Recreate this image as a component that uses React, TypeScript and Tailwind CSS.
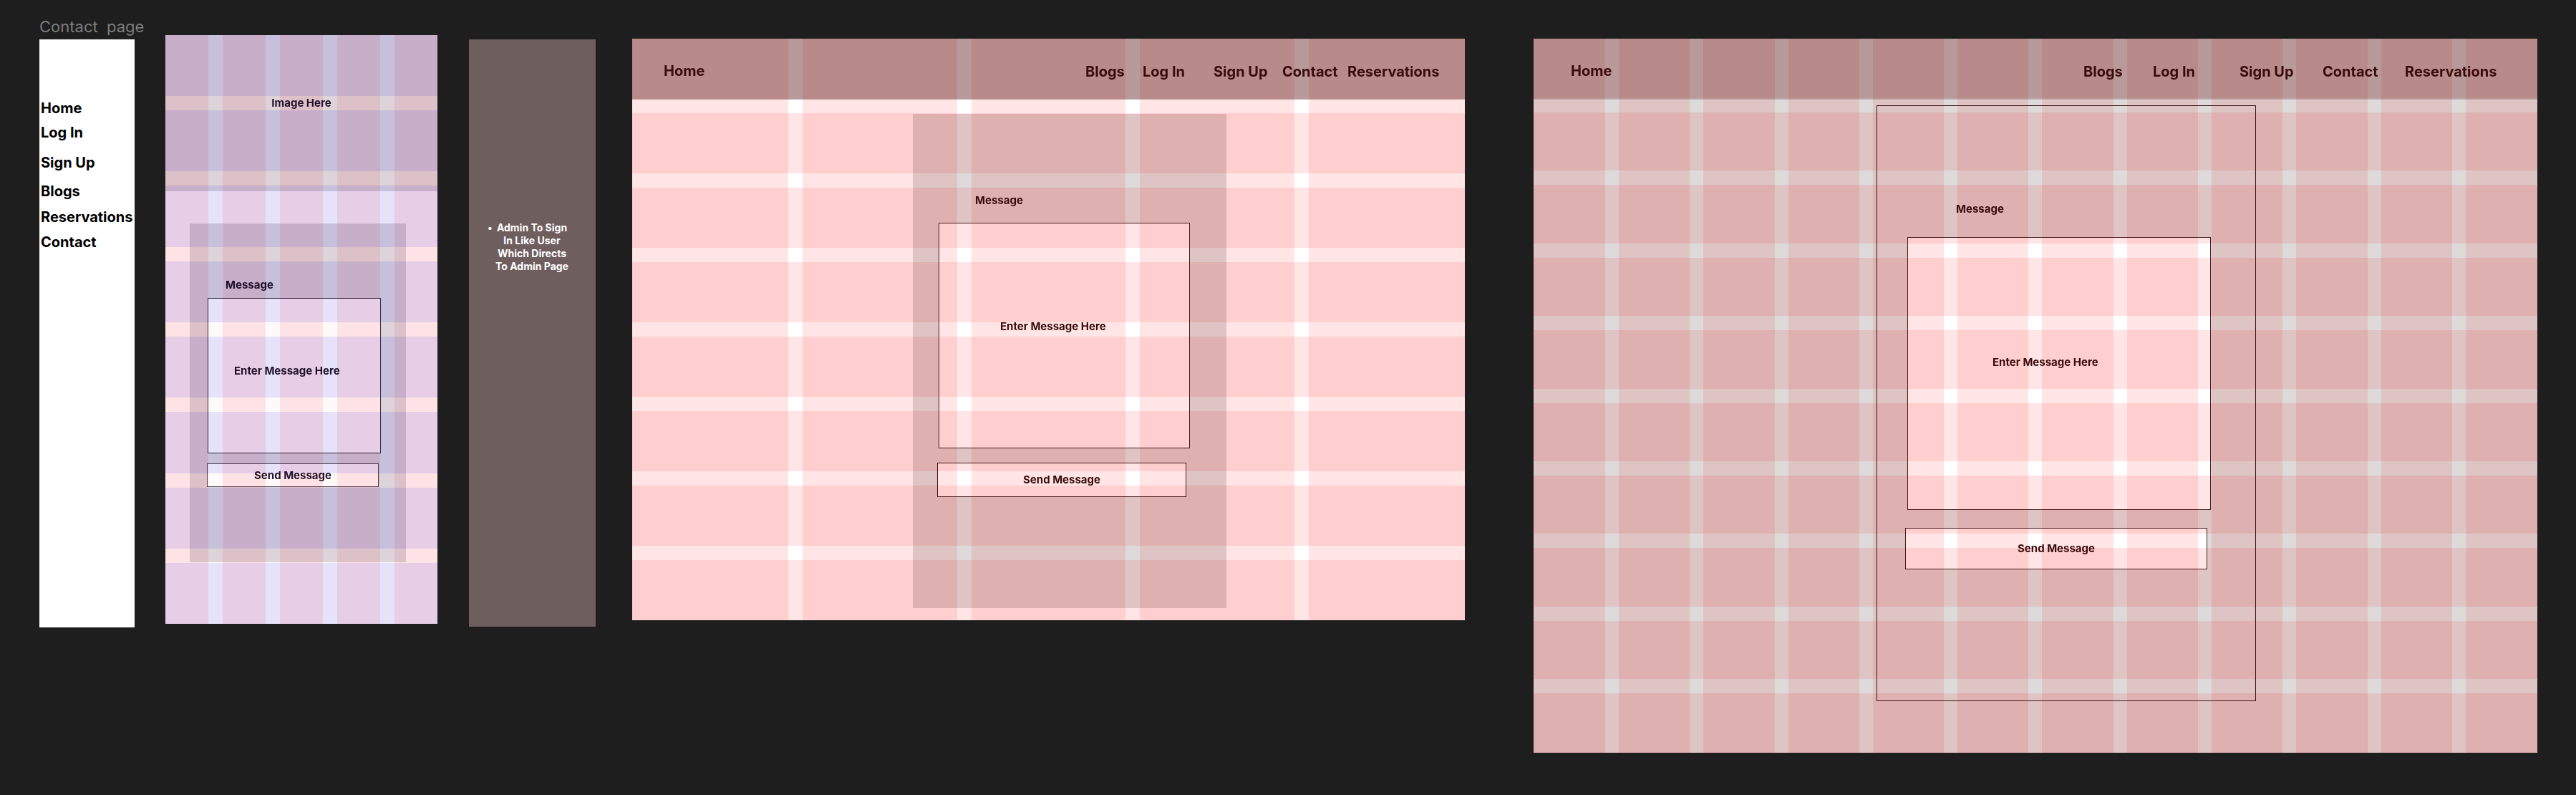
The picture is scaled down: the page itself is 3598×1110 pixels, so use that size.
import React from "react";

function Cols({ n, cls, stripe }: { n: number; cls: string; stripe: string }) {
  return (
    <div className={"pointer-events-none absolute inset-0 flex justify-between " + cls}>
      {Array.from({ length: n }).map((_, i) => (
        <div key={i} className={"h-full " + stripe} />
      ))}
    </div>
  );
}

function Rows({ n, cls, stripe }: { n: number; cls: string; stripe: string }) {
  return (
    <div className={"pointer-events-none absolute inset-0 flex flex-col justify-between " + cls}>
      {Array.from({ length: n }).map((_, i) => (
        <div key={i} className={"w-full " + stripe} />
      ))}
    </div>
  );
}

const PINK_STRIPE_V = "w-[20px] bg-[#001a1a] mix-blend-color-dodge";
const PINK_STRIPE_H = "h-[20px] bg-[#001a1a] mix-blend-color-dodge";

export default function App() {
  return (
    <div className="relative h-[1110px] w-[3598px] overflow-hidden bg-[#1e1e1e] font-['Inter',sans-serif]">
      {/* canvas label */}
      <div className="absolute left-[55px] top-[26px] whitespace-pre text-[22px] leading-[22px] text-[#7d7d7d]">
        Contact  page
      </div>

      {/* Frame 1: white side nav */}
      <div className="absolute left-[55px] top-[55px] flex h-[821px] w-[133px] flex-col items-start bg-white pl-[2px] pt-[84px] text-[20px] font-bold leading-[24px] text-black">
        <span>Home</span>
        <span className="mt-[10px]">Log In</span>
        <span className="mt-[18px]">Sign Up</span>
        <span className="mt-[16px]">Blogs</span>
        <span className="mt-[12px]">Reservations</span>
        <span className="mt-[11px]">Contact</span>
      </div>

      {/* Frame 2: purple mobile */}
      <div className="absolute left-[231px] top-[49px] isolate h-[822px] w-[380px] overflow-hidden bg-[#e5cee6] text-[15px] font-bold leading-[18px] text-[#20102a]">
        <div className="h-[218px] bg-[#c7afc9] pt-[86px] text-center">Image Here</div>
        <div className="ml-[34px] mt-[45px] flex h-[473px] w-[302px] flex-col items-start bg-[#c7afc9]">
          <p className="ml-[50px] mt-[77px]">Message</p>
          <div className="ml-[25px] mt-[9px] h-[217px] w-[242px] border border-[#342538] bg-[#e5cee6] pl-[36px] pt-[92px]">
            Enter Message Here
          </div>
          <div className="ml-[24px] mt-[14px] flex h-[33px] w-[240px] items-center justify-center border border-[#4a3a4e] bg-[#e5cee6]">
            Send Message
          </div>
        </div>
        <Cols n={4} cls="px-[60px]" stripe="w-[20px] bg-[#001714] mix-blend-color-dodge" />
        <Rows n={7} cls="py-[85px]" stripe="h-[20px] bg-[#191800] mix-blend-color-dodge" />
      </div>

      {/* Frame: admin note */}
      <div className="absolute left-[655px] top-[55px] h-[820px] w-[177px] bg-[#6f5e5e] pl-[26px] pt-[254px] text-[14px] font-bold leading-[18px] text-white">
        <div className="flex items-start">
          <span className="w-[9px]">•</span>
          <div className="w-[106px] text-center">
            Admin To Sign
            <br />
            In Like User
            <br />
            Which Directs
            <br />
            To Admin Page
          </div>
        </div>
      </div>

      {/* Frame 3: pink desktop */}
      <div className="absolute left-[883px] top-[54px] isolate h-[812px] w-[1163px] overflow-hidden bg-[#ffcece] text-[#3b0b0b]">
        <header className="flex h-[85px] items-start bg-[#b98a8a] pl-[44px] pt-[33px] text-[20px] font-bold leading-[24px]">
          <span className="w-[589px]">Home</span>
          <nav className="mt-[1px] flex">
            <span className="w-[80px]">Blogs</span>
            <span className="w-[99px]">Log In</span>
            <span className="w-[96px]">Sign Up</span>
            <span className="w-[91px]">Contact</span>
            <span>Reservations</span>
          </nav>
        </header>
        <div className="ml-[392px] mt-[20px] flex h-[690px] w-[438px] flex-col items-start bg-[#dfb0b0] text-[15px] font-bold leading-[18px]">
          <p className="ml-[87px] mt-[112px]">Message</p>
          <div className="ml-[36px] mt-[22px] h-[315px] w-[351px] border border-[#4a1a1a] bg-[#ffcece] pl-[85px] pt-[135px]">
            Enter Message Here
          </div>
          <div className="ml-[34px] mt-[20px] flex h-[48px] w-[348px] items-center justify-center border border-[#4a1a1a] bg-[#ffcece]">
            Send Message
          </div>
        </div>
        <Cols n={4} cls="px-[218px]" stripe={PINK_STRIPE_V} />
        <Rows n={7} cls="py-[84px]" stripe={PINK_STRIPE_H} />
      </div>

      {/* Frame 4: large desktop */}
      <div className="absolute left-[2142px] top-[54px] isolate h-[997px] w-[1402px] overflow-hidden bg-[#dfb0b0] text-[#3b0b0b]">
        <header className="flex h-[85px] items-start bg-[#b98a8a] pl-[52px] pt-[33px] text-[20px] font-bold leading-[24px]">
          <span className="w-[716px]">Home</span>
          <nav className="mt-[1px] flex">
            <span className="w-[97px]">Blogs</span>
            <span className="w-[121px]">Log In</span>
            <span className="w-[116px]">Sign Up</span>
            <span className="w-[115px]">Contact</span>
            <span>Reservations</span>
          </nav>
        </header>
        <div className="ml-[479px] mt-[8px] flex h-[832px] w-[530px] flex-col items-start border border-[#3d1414] text-[15px] font-bold leading-[18px]">
          <p className="ml-[110px] mt-[135px]">Message</p>
          <div className="ml-[42px] mt-[30px] h-[381px] w-[424px] border border-[#4a1a1a] bg-[#ffcece] pl-[118px] pt-[165px]">
            Enter Message Here
          </div>
          <div className="ml-[39px] mt-[25px] flex h-[58px] w-[422px] items-center justify-center border border-[#4a1a1a] bg-[#ffcece]">
            Send Message
          </div>
        </div>
        <Cols n={11} cls="px-[100px]" stripe="w-[19px] bg-[#001a1a] mix-blend-color-dodge" />
        <Rows n={9} cls="py-[83px]" stripe={PINK_STRIPE_H} />
      </div>
    </div>
  );
}
